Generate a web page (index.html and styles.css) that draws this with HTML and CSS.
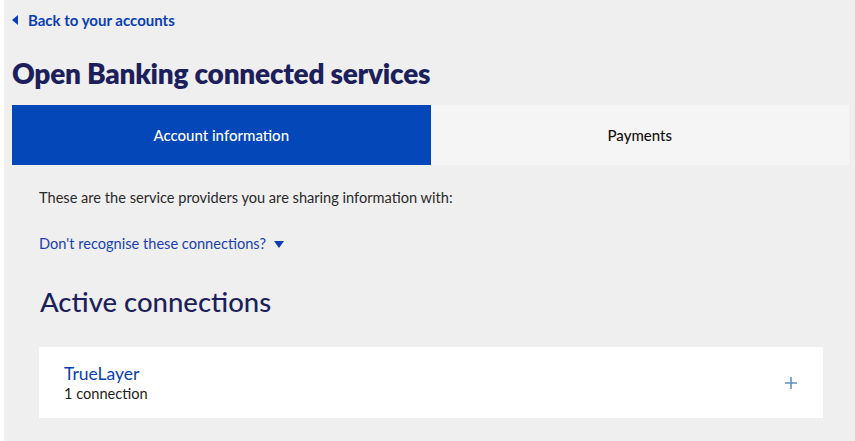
FILE: index.html
```html
<!DOCTYPE html>
<html>
<head>
<meta charset="utf-8">
<link rel="stylesheet" href="styles.css">
</head>
<body>
<div class="page">
  <a class="back" href="#"><span class="back-tri"></span>Back to your accounts</a>
  <h1 class="title">Open Banking connected services</h1>
  <div class="tabs">
    <div class="tab tab-active">Account information</div>
    <div class="tab">Payments</div>
  </div>
  <div class="content">
    <p class="intro">These are the service providers you are sharing information with:</p>
    <a class="toggle" href="#">Don't recognise these connections? <span class="down-tri"></span></a>
    <h2 class="subtitle">Active connections</h2>
    <div class="card">
      <div class="card-text">
        <div class="provider">TrueLayer</div>
        <div class="count">1 connection</div>
      </div>
      <svg class="plus" width="12" height="12" viewBox="0 0 12 12"><path d="M6 0v12M0 6h12" stroke="#5b8fd1" stroke-width="1.6" fill="none"/></svg>
    </div>
  </div>
</div>
</body>
</html>
```
FILE: styles.css
```css
html, body {
  margin: 0;
  padding: 0;
  background: #ffffff;
}
body {
  font-family: Lato, "Open Sans", sans-serif;
  width: 855px;
  height: 441px;
  overflow: hidden;
}
.page {
  margin-left: 4px;
  height: 441px;
  background: #efefef;
  padding: 10px 6px 0 8px;
  box-sizing: border-box;
}
.back {
  display: flex;
  align-items: center;
  color: #0b3eb3;
  font-weight: 700;
  font-size: 15px;
  text-decoration: none;
  height: 20px;
}
.back-tri {
  width: 0;
  height: 0;
  border-top: 5px solid transparent;
  border-bottom: 5px solid transparent;
  border-right: 6px solid #0b3eb3;
  margin-right: 10px;
}
.title {
  margin: 27px 0 0 0;
  font-size: 28px;
  line-height: 32px;
  font-weight: 800;
  color: #1d1f5b;
  letter-spacing: -0.25px;
}
.tabs {
  display: flex;
  margin-top: 16px;
  height: 60px;
}
.tab {
  flex: 1;
  display: flex;
  align-items: center;
  justify-content: center;
  background: #f5f5f5;
  color: #111;
  font-size: 15px;
  font-weight: 500;
  padding-bottom: 1px;
}
.tab-active {
  background: #0447b8;
  color: #fff;
}
.content {
  padding: 0 26px 0 27px;
}
.intro {
  margin: 23px 0 0 0;
  font-size: 14.6px;
  line-height: 20px;
  color: #2a2a2a;
}
.toggle {
  display: inline-flex;
  align-items: center;
  margin-top: 26px;
  color: #1a3fb0;
  font-size: 14.6px;
  line-height: 20px;
  text-decoration: none;
}
.down-tri {
  display: inline-block;
  width: 0;
  height: 0;
  border-left: 5px solid transparent;
  border-right: 5px solid transparent;
  border-top: 7px solid #0b3eb3;
  margin-left: 8px;
}
.subtitle {
  margin: 31px 0 0 1px;
  font-size: 27.5px;
  line-height: 34px;
  font-weight: 500;
  color: #1d1f5b;
}
.card {
  margin-top: 28px;
  background: #fff;
  height: 71px;
  display: flex;
  align-items: center;
  justify-content: space-between;
  padding: 0 26px 0 25px;
  box-sizing: border-box;
}
.card-text {
  padding-top: 3px;
}
.provider {
  color: #0b3eb3;
  font-size: 17.5px;
  line-height: 20px;
}
.count {
  color: #222;
  font-size: 14.6px;
  line-height: 20px;
}
.plus {
  display: block;
}
```
